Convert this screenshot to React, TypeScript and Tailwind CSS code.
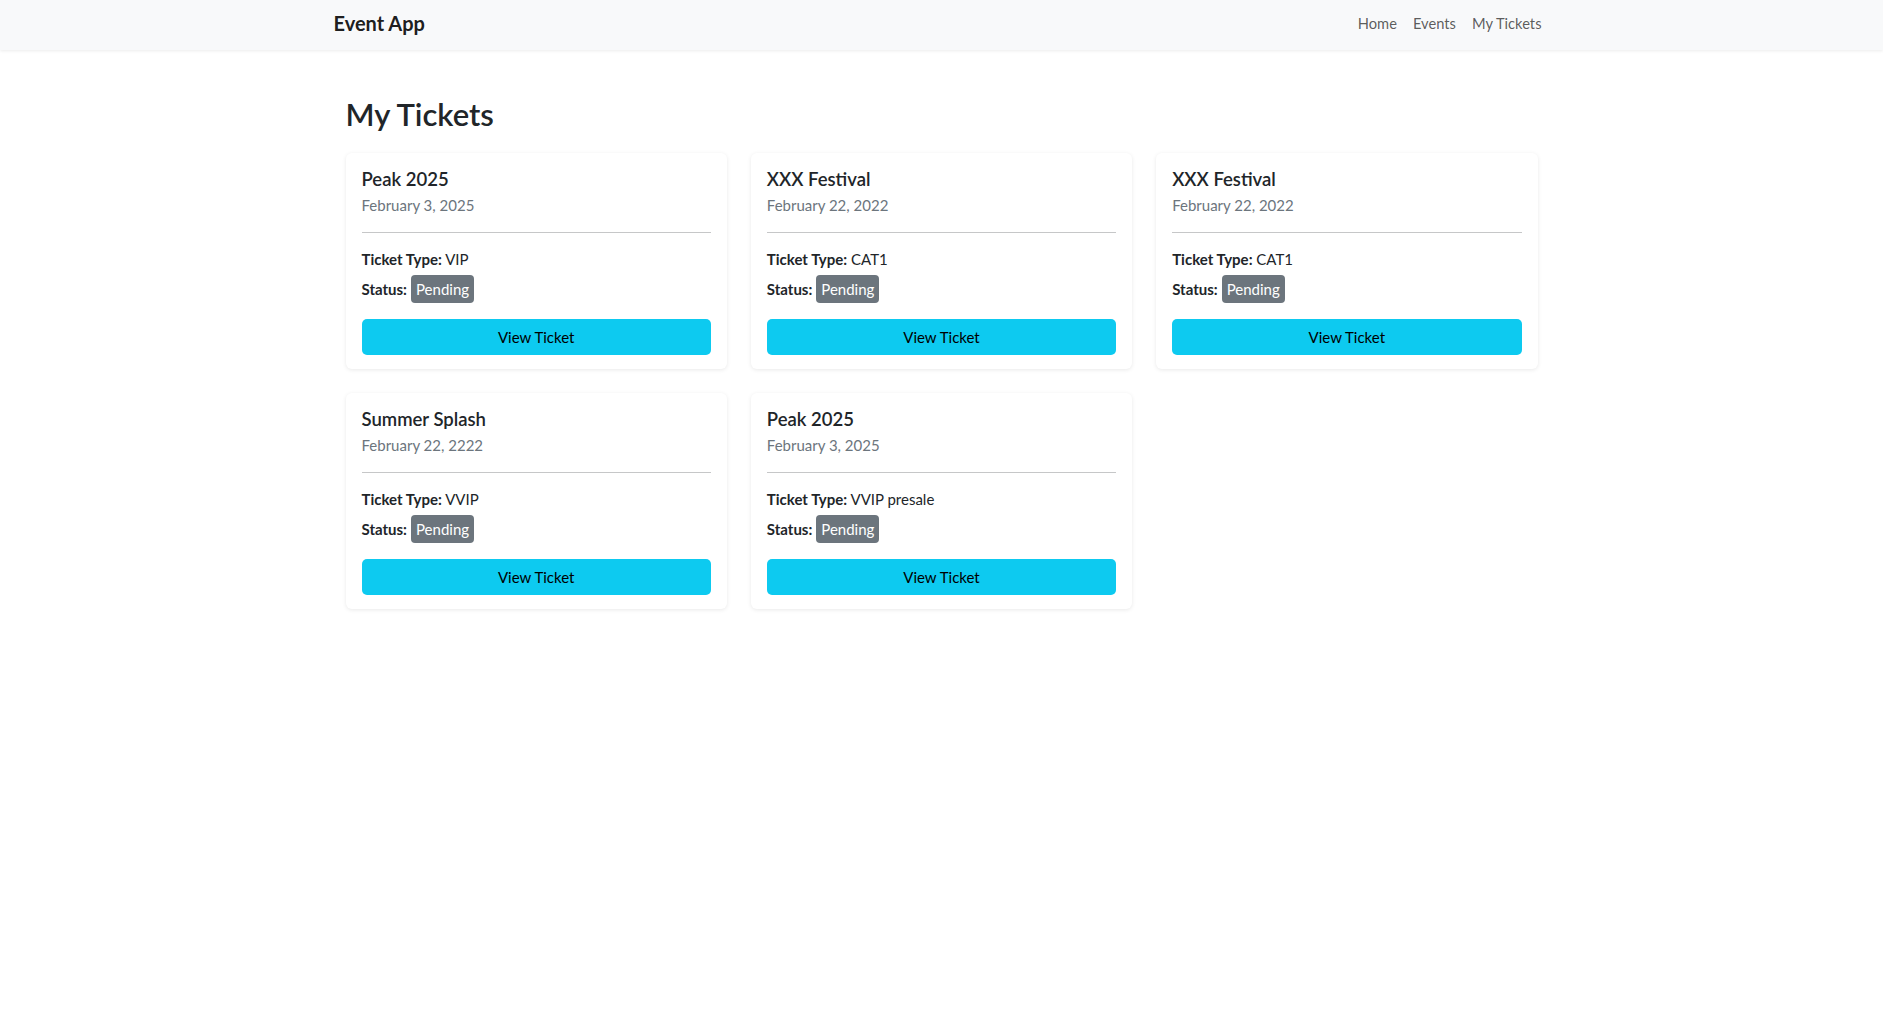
import React from 'react';

type Ticket = {
  id: number;
  event: string;
  date: string;
  type: string;
  status: string;
};

const tickets: Ticket[] = [
  { id: 1, event: 'Peak 2025', date: 'February 3, 2025', type: 'VIP', status: 'Pending' },
  { id: 2, event: 'XXX Festival', date: 'February 22, 2022', type: 'CAT1', status: 'Pending' },
  { id: 3, event: 'XXX Festival', date: 'February 22, 2022', type: 'CAT1', status: 'Pending' },
  { id: 4, event: 'Summer Splash', date: 'February 22, 2222', type: 'VVIP', status: 'Pending' },
  { id: 5, event: 'Peak 2025', date: 'February 3, 2025', type: 'VVIP presale', status: 'Pending' },
];

const TicketCard: React.FC<{ ticket: Ticket }> = ({ ticket }) => (
  <div className="bg-white rounded-[6px] shadow-[0_1px_4px_rgba(0,0,0,0.09)] px-4 pt-[14px] pb-[14px]">
    <h5 className="text-[18.5px] leading-6 font-semibold text-[#212529]">{ticket.event}</h5>
    <p className="mt-[2px] text-[15px] leading-6 text-[#6c757d]">{ticket.date}</p>
    <hr className="mt-[15px] border-0 h-px bg-[#c6c7c8]" />
    <p className="mt-[14px] text-[15px] leading-6 text-[#212529]">
      <span className="font-bold">Ticket Type:</span> {ticket.type}
    </p>
    <div className="mt-[4px] flex items-center h-7 text-[15px] text-[#212529]">
      <span className="font-bold">Status:</span>
      <span className="ml-1 h-7 flex items-center px-[5px] rounded-[4px] bg-[#6c757d] text-white">
        {ticket.status}
      </span>
    </div>
    <button className="mt-4 w-full h-9 rounded-[5px] bg-[#0dcaf0] text-[15px] text-black">
      View Ticket
    </button>
  </div>
);

export default function App() {
  return (
    <div className="min-h-screen bg-white font-['Lato',sans-serif] text-[#212529]">
      <nav className="h-[50px] bg-[#f8f9fa] shadow-[0_1px_3px_rgba(0,0,0,0.08)]">
        <div className="mx-auto w-[1216px] h-full pb-1 flex items-center justify-between">
          <span className="text-[20px] font-bold text-black/90">Event App</span>
          <div className="flex items-center text-[14.7px] text-black/65">
            <a className="px-2">Home</a>
            <a className="px-2">Events</a>
            <a className="px-2">My Tickets</a>
          </div>
        </div>
      </nav>

      <main className="mx-auto w-[1192px] pt-[46px]">
        <h2 className="text-[31px] leading-[1.2] font-semibold mb-[20px]">My Tickets</h2>
        <div className="grid grid-cols-3 gap-6">
          {tickets.map((t) => (
            <TicketCard key={t.id} ticket={t} />
          ))}
        </div>
      </main>
    </div>
  );
}
